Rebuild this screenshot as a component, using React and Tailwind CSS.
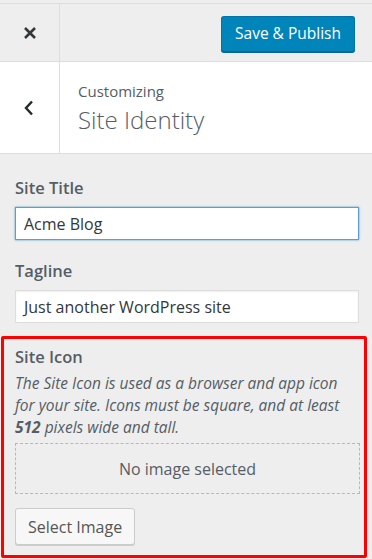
import React from "react";

const font = { fontFamily: '"Open Sans", "Noto Sans", sans-serif' };

const CloseIcon = () => (
  <svg width="14" height="14" viewBox="0 0 14 14" className="text-[#32373c]">
    <path d="M2 2 L12 12 M12 2 L2 12" stroke="currentColor" strokeWidth="2.6" strokeLinecap="butt" />
  </svg>
);

const BackIcon = () => (
  <svg width="10" height="16" viewBox="0 0 10 16" className="text-[#23282d]">
    <path d="M8 1.5 L2 8 L8 14.5" stroke="currentColor" strokeWidth="2.4" fill="none" />
  </svg>
);

const Field = ({ label, value, focused }) => (
  <div>
    <div className="text-[16.5px] font-semibold text-[#555d66] leading-[23px]">{label}</div>
    <div
      className={
        "mt-[8px] h-[33px] bg-white flex items-center px-[8px] text-[16px] text-[#32373c] " +
        (focused
          ? "border border-[#5b9dd9] shadow-[0_0_2px_rgba(30,140,190,0.8)]"
          : "border border-[#ddd] shadow-[inset_0_1px_2px_rgba(0,0,0,0.07)]")
      }
    >
      {value}
    </div>
  </div>
);

export default function App() {
  return (
    <div className="w-[372px] h-[559px] bg-[#eeeeee] overflow-hidden" style={font}>
      <div className="h-[3px]" />
      {/* header */}
      <div className="h-[59px] border-t border-b border-[#dddddd] flex">
        <div className="w-[60px] border-r border-[#dddddd] flex items-center justify-center">
          <CloseIcon />
        </div>
        <div className="flex-1 flex justify-end items-center pr-[17px] pt-[2px]">
          <button className="h-[36px] w-[134px] rounded-[3px] bg-[#0085ba] border border-[#0073aa] border-b-[#006799] shadow-[0_1px_0_#006799] text-white text-[15.5px]">
            Save &amp; Publish
          </button>
        </div>
      </div>

      {/* section title */}
      <div className="h-[92px] bg-white border-b border-[#dddddd] flex">
        <div className="w-[60px] border-r border-[#dddddd] flex items-center justify-center pr-[2px]">
          <BackIcon />
        </div>
        <div className="flex-1 pl-[18px] pt-[19px]">
          <div className="text-[15px] leading-[20px] text-[#555d66]">Customizing</div>
          <div className="text-[24px] leading-[32px] font-light text-[#555d66] mt-[3px]">Site Identity</div>
        </div>
      </div>

      {/* fields */}
      <div className="pl-[15px] pr-[13px] pt-[22px] flex flex-col gap-[19px]">
        <Field label="Site Title" value="Acme Blog" focused />
        <Field label="Tagline" value="Just another WordPress site" />
      </div>

      {/* site icon */}
      <div className="ml-[1px] mr-[5px] mt-[13px] h-[222px] border-[3.5px] border-[#ff0000] rounded-[2px] pl-[11px] pr-[4px] pt-[6px]">
        <div className="text-[16.5px] font-semibold text-[#555d66] leading-[23px]">Site Icon</div>
        <p className="mt-[4px] text-[15.5px] italic leading-[22px] text-[#555d66]">
          The Site Icon is used as a browser and app icon for your site. Icons must be square, and at least{" "}
          <b className="font-bold">512</b> pixels wide and tall.
        </p>
        <div className="mt-[5px] h-[51px] border border-dashed border-[#b4b9be] flex items-center justify-center text-[16px] text-[#555d66]">
          No image selected
        </div>
        <button className="mt-[14px] h-[37px] px-[12px] rounded-[3px] bg-[#f7f7f7] border border-[#cccccc] shadow-[0_1px_0_#cccccc] text-[16px] text-[#555555]">
          Select Image
        </button>
      </div>
    </div>
  );
}
